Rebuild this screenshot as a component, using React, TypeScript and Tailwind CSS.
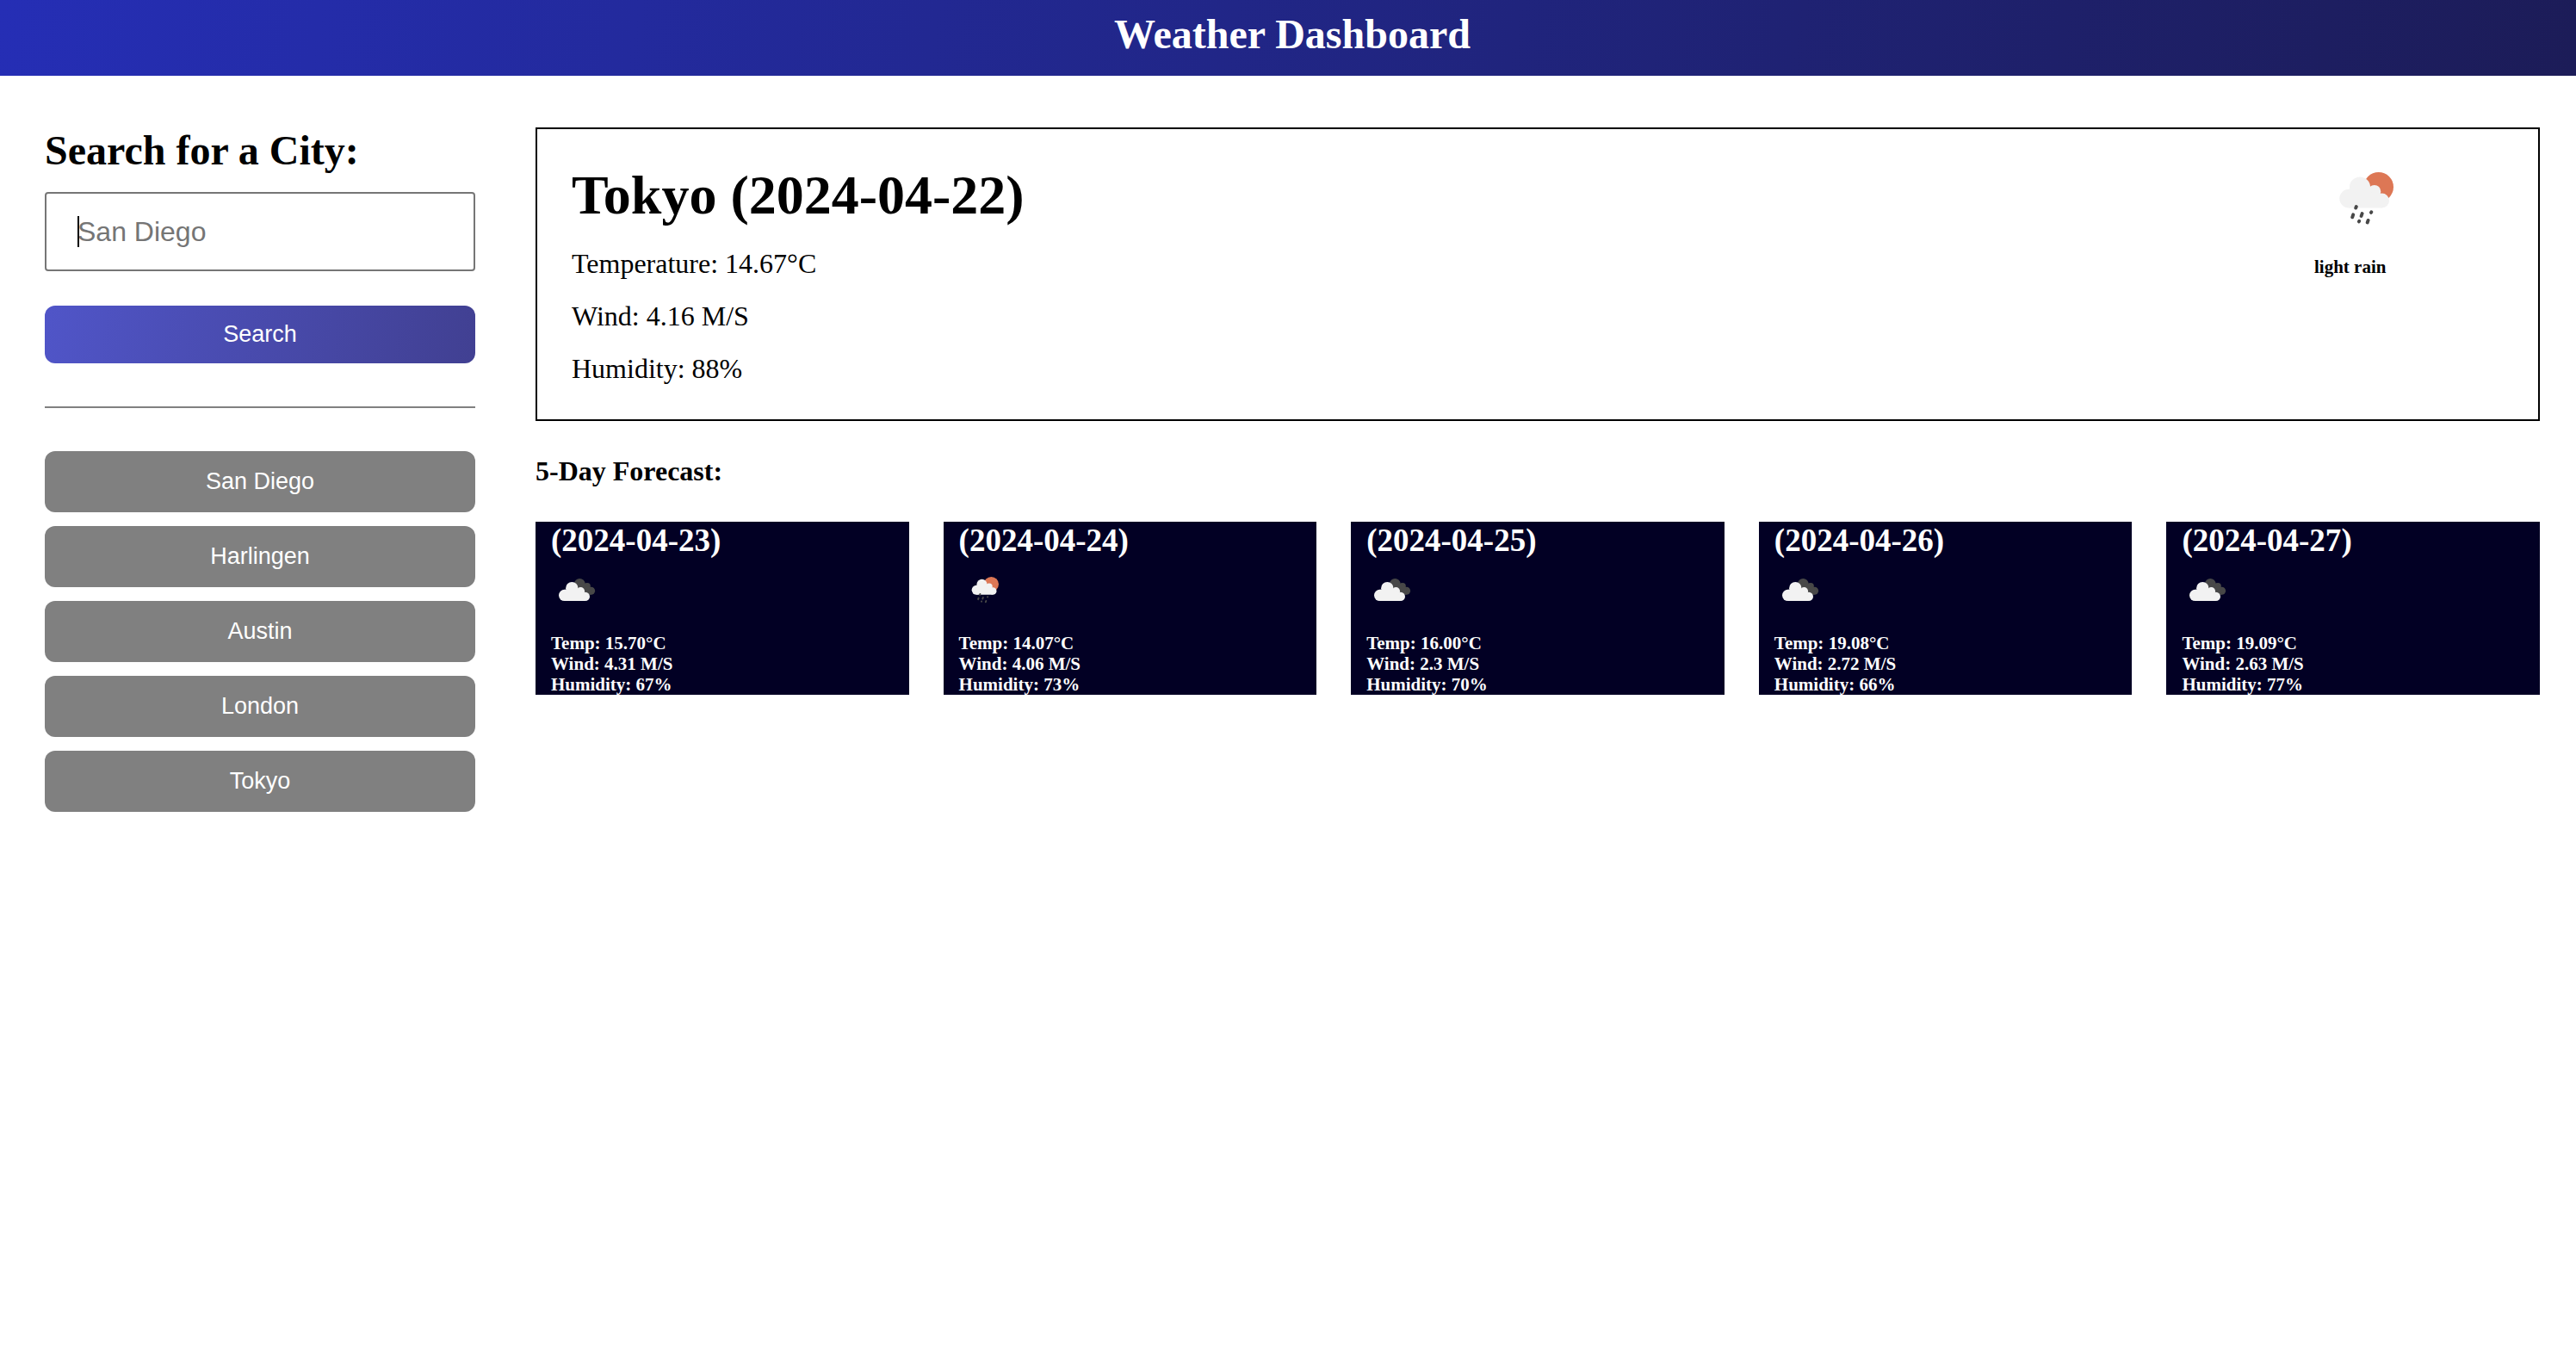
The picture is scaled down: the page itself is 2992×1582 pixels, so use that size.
const cities = ["San Diego", "Harlingen", "Austin", "London", "Tokyo"];

type Sky = "clouds" | "rain";

const forecast: { date: string; sky: Sky; temp: string; wind: string; humidity: number }[] = [
  { date: "2024-04-23", sky: "clouds", temp: "15.70", wind: "4.31", humidity: 67 },
  { date: "2024-04-24", sky: "rain", temp: "14.07", wind: "4.06", humidity: 73 },
  { date: "2024-04-25", sky: "clouds", temp: "16.00", wind: "2.3", humidity: 70 },
  { date: "2024-04-26", sky: "clouds", temp: "19.08", wind: "2.72", humidity: 66 },
  { date: "2024-04-27", sky: "clouds", temp: "19.09", wind: "2.63", humidity: 77 },
];

function RainIcon({ className }: { className: string }) {
  return (
    <svg viewBox="0 0 100 100" className={className} role="img" aria-label="Rain">
      <circle cx="62.7" cy="37.2" r="17.3" fill="#dd7755" />
      <g fill="#f2f2f2">
        <circle cx="28.2" cy="50.6" r="10.9" />
        <circle cx="41" cy="37.5" r="12.1" />
        <circle cx="57.8" cy="42.4" r="7.5" />
        <circle cx="66.5" cy="53" r="8.5" />
        <path d="M28 61.5V39.7h13l22 6 3.5 15.8z" />
      </g>
      <g stroke="#484848" strokeWidth="3.9" strokeLinecap="round">
        <path d="M36.8 60l-.6 1.6M33.2 69.3l-1 3M43.6 68l-1 3M54.3 66.3l-.3.6M40.2 76.8l-.3.6M50.6 75.9l-.9 2.6" />
      </g>
    </svg>
  );
}

function CloudsIcon({ className }: { className: string }) {
  return (
    <svg viewBox="0 0 50 50" className={className} role="img" aria-label="Broken clouds">
      <g fill="#484848">
        <circle cx="27.3" cy="18.2" r="6.3" />
        <circle cx="36" cy="21" r="3.9" />
        <circle cx="40.6" cy="26.3" r="4.5" />
        <path d="M27 17l9 1 4 5 .6 7.8H27z" />
      </g>
      <g fill="#f2f2f2">
        <circle cx="9.7" cy="31.4" r="6.7" />
        <circle cx="18.3" cy="23.2" r="7.2" />
        <circle cx="28.4" cy="26.7" r="4.7" />
        <circle cx="33.8" cy="32.9" r="5.2" />
        <path d="M9.7 38.1V24.7h8.6l13.2 4 2.3 9.4z" />
      </g>
    </svg>
  );
}

export default function App() {
  return (
    <div className="min-h-screen bg-white font-['Liberation_Serif',serif] text-black">
      <header className="bg-linear-100 from-[#252eb5] to-[#1c1c58] pt-3 pb-5 pl-[10px] text-center">
        <h1 className="text-5xl leading-14 font-bold text-white">Weather Dashboard</h1>
      </header>

      <div className="flex gap-[70px] pt-[60px] pr-[42px] pl-[52px]">
        <aside className="w-[500px] shrink-0">
          <form className="flex flex-col" onSubmit={(e) => e.preventDefault()}>
            <label htmlFor="city" className="mb-[22px] text-5xl leading-[53px] font-bold">
              Search for a City:
            </label>
            <div className="relative flex flex-col">
              <input
                id="city"
                type="text"
                placeholder="San Diego"
                className="h-[92px] rounded-sm border-2 border-[#767676] bg-white px-9 font-['Liberation_Sans',sans-serif] text-[32px] outline-none placeholder:text-[#757575]"
              />
              <span aria-hidden="true" className="absolute top-7 left-[38px] h-9 w-[2px] bg-black" />
            </div>
            <button
              type="submit"
              className="mt-10 rounded-xl bg-linear-100 from-[#5055c8] to-[#414092] py-[18px] font-['Liberation_Sans',sans-serif] text-[27px] leading-[31px] text-white"
            >
              Search
            </button>
          </form>
          <hr className="mt-[50px] mb-[50px] border-t-2 border-[#808080]" />
          <div className="flex flex-col gap-4">
            {cities.map((city) => (
              <button
                key={city}
                type="button"
                className="rounded-xl bg-[#808080] py-5 font-['Liberation_Sans',sans-serif] text-[27px] leading-[31px] text-white"
              >
                {city}
              </button>
            ))}
          </div>
        </aside>

        <main className="min-w-0 flex-1">
          <section className="flex justify-between border-2 border-black px-10 pt-[30px] pb-10">
            <div className="pt-[10px]">
              <h2 className="text-[64px] leading-[74px] font-bold">Tokyo (2024-04-22)</h2>
              <div className="mt-6 flex flex-col gap-6 text-[32px] leading-[37px]">
                <p>Temperature: 14.67°C</p>
                <p>Wind: 4.16 M/S</p>
                <p>Humidity: 88%</p>
              </div>
            </div>
            <div className="mr-[108px] w-28">
              <RainIcon className="ml-3 size-[100px]" />
              <p className="mt-[18px] text-[21px] leading-6 font-bold">light rain</p>
            </div>
          </section>

          <h3 className="mt-10 text-[32px] leading-9 font-bold">5-Day Forecast:</h3>

          <div className="mt-[41px] grid grid-cols-5 gap-10">
            {forecast.map((day) => (
              <article key={day.date} className="bg-[#020024] px-[18px] font-bold text-white">
                <h4 className="text-[37px] leading-[43px]">({day.date})</h4>
                {day.sky === "rain" ? (
                  <RainIcon className="mt-[11px] ml-[6px] size-[50px]" />
                ) : (
                  <CloudsIcon className="mt-[11px] ml-[6px] size-[50px]" />
                )}
                <div className="mt-[25px] text-[21px] leading-6">
                  <p>Temp: {day.temp}°C</p>
                  <p>Wind: {day.wind} M/S</p>
                  <p>Humidity: {day.humidity}%</p>
                </div>
              </article>
            ))}
          </div>
        </main>
      </div>
    </div>
  );
}
